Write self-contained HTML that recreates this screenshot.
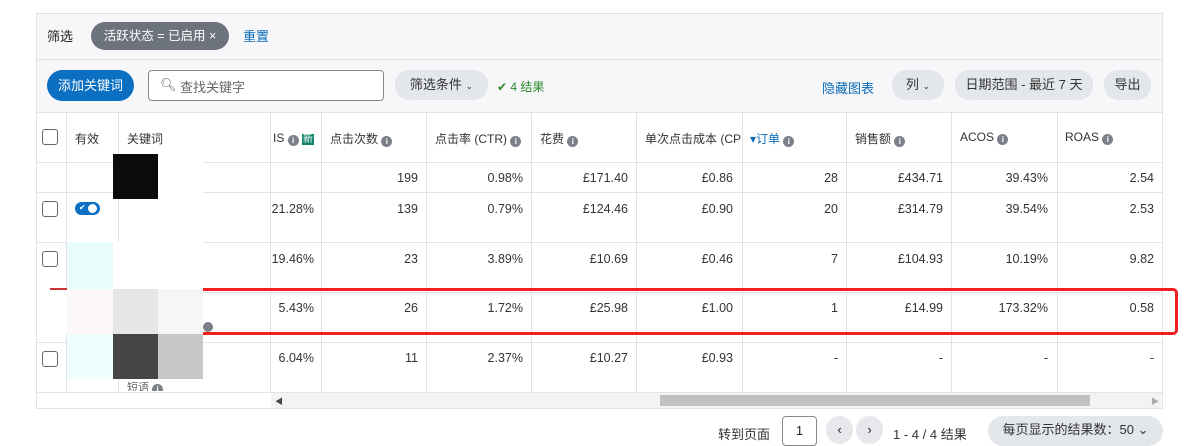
<!DOCTYPE html><html><head><meta charset="utf-8"><style>
body{margin:0;width:1185px;height:433px;overflow:hidden;background:#fff;font-family:"Liberation Sans","Noto Sans CJK SC",sans-serif;font-size:12.5px;color:#222;position:relative}
.a{position:absolute}
.hl{position:absolute;height:1px;background:#e3e3e6}
.vl{position:absolute;width:1px;background:#e3e3e6;top:112px;height:280px}
.pill{position:absolute;background:#e3e6ea;border-radius:14px;height:30px;line-height:30px;text-align:center;color:#333;font-size:13px}
.cb{position:absolute;width:14px;height:14px;border:1px solid #666;border-radius:3px;background:#fff}
.i{display:inline-block;width:11px;height:11px;border-radius:50%;background:#7b8088;color:#fff;font-size:8px;line-height:11px;text-align:center;vertical-align:-1px;font-weight:bold}
.r{position:absolute;text-align:right;color:#333}
.h{position:absolute;top:130px;color:#333;font-size:12px}
.blk{position:absolute}
</style></head><body>
<div class="a" style="left:36px;top:13px;width:1127px;height:396px;border:1px solid #e3e3e6;box-sizing:border-box;background:#fff"></div>
<div class="a" style="left:37px;top:14px;width:1125px;height:98px;background:#f7f7f9"></div>
<div class="hl" style="left:37px;top:59px;width:1125px"></div>
<div class="a" style="left:47px;top:26px;font-size:13px">筛选</div>
<div class="a" style="left:91px;top:22px;width:138px;height:28px;border-radius:14px;background:#6c737d;color:#fff;line-height:28px;text-align:center;font-size:12.5px">活跃状态 = 已启用 ×</div>
<div class="a" style="left:243px;top:26px;color:#0a6bb8;font-size:13px">重置</div>
<div class="a" style="left:47px;top:70px;width:87px;height:31px;border-radius:16px;background:#0b6fc2;color:#fff;line-height:31px;text-align:center;font-size:13px">添加关键词</div>
<div class="a" style="left:148px;top:70px;width:236px;height:31px;border:1px solid #888;border-radius:4px;box-sizing:border-box;background:#fff"></div>
<div class="a" style="left:160px;top:77px;color:#666;font-size:13px">🔍︎</div>
<div class="a" style="left:180px;top:77px;color:#666;font-size:13px">查找关键字</div>
<div class="pill" style="left:395px;top:70px;width:93px">筛选条件 <span style="font-size:9px">⌄</span></div>
<div class="a" style="left:497px;top:78px;color:#2a8a2a;font-size:12px">✔ 4 结果</div>
<div class="a" style="left:822px;top:78px;color:#0a6bb8;font-size:13px">隐藏图表</div>
<div class="pill" style="left:892px;top:70px;width:52px">列 <span style="font-size:9px">⌄</span></div>
<div class="pill" style="left:955px;top:70px;width:138px">日期范围 - 最近 7 天</div>
<div class="pill" style="left:1104px;top:70px;width:47px">导出</div>
<div class="hl" style="left:37px;top:112px;width:1125px"></div>
<div class="hl" style="left:37px;top:162px;width:1125px"></div>
<div class="hl" style="left:37px;top:192px;width:1125px"></div>
<div class="hl" style="left:37px;top:242px;width:1125px"></div>
<div class="hl" style="left:37px;top:292px;width:1125px"></div>
<div class="hl" style="left:37px;top:342px;width:1125px"></div>
<div class="hl" style="left:37px;top:392px;width:1125px"></div>
<div class="vl" style="left:66px"></div><div class="vl" style="left:118px"></div><div class="vl" style="left:270px"></div><div class="vl" style="left:321px"></div><div class="vl" style="left:426px"></div><div class="vl" style="left:531px"></div><div class="vl" style="left:636px"></div><div class="vl" style="left:742px"></div><div class="vl" style="left:846px"></div><div class="vl" style="left:951px"></div><div class="vl" style="left:1057px"></div>
<div class="cb" style="left:42px;top:129px"></div>
<div class="h" style="left:75px">有效</div><div class="h" style="left:127px">关键词</div>
<div class="h" style="left:273px">IS <span class="i">i</span> <span style="background:#14866d;color:#fff;font-size:10px;padding:0 1px">新</span></div>
<div class="h" style="left:330px">点击次数 <span class="i">i</span></div>
<div class="h" style="left:435px">点击率 (CTR) <span class="i">i</span></div>
<div class="h" style="left:540px">花费 <span class="i">i</span></div>
<div class="h" style="left:645px;width:96px;overflow:hidden;white-space:nowrap">单次点击成本 (CPC)</div>
<div class="h" style="left:750px;color:#0a6bb8">▾订单 <span class="i">i</span></div>
<div class="h" style="left:855px">销售额 <span class="i">i</span></div>
<div class="h" style="left:960px">ACOS <span class="i">i</span></div>
<div class="h" style="left:1065px">ROAS <span class="i">i</span></div>
<div class="r" style="left:321px;width:97px;top:171px">199</div><div class="r" style="left:426px;width:97px;top:171px">0.98%</div><div class="r" style="left:531px;width:97px;top:171px">£171.40</div><div class="r" style="left:636px;width:97px;top:171px">£0.86</div><div class="r" style="left:742px;width:96px;top:171px">28</div><div class="r" style="left:846px;width:97px;top:171px">£434.71</div><div class="r" style="left:951px;width:97px;top:171px">39.43%</div><div class="r" style="left:1057px;width:97px;top:171px">2.54</div>
<div class="r" style="left:270px;width:44px;top:202px">21.28%</div><div class="r" style="left:321px;width:97px;top:202px">139</div><div class="r" style="left:426px;width:97px;top:202px">0.79%</div><div class="r" style="left:531px;width:97px;top:202px">£124.46</div><div class="r" style="left:636px;width:97px;top:202px">£0.90</div><div class="r" style="left:742px;width:96px;top:202px">20</div><div class="r" style="left:846px;width:97px;top:202px">£314.79</div><div class="r" style="left:951px;width:97px;top:202px">39.54%</div><div class="r" style="left:1057px;width:97px;top:202px">2.53</div>
<div class="r" style="left:270px;width:44px;top:252px">19.46%</div><div class="r" style="left:321px;width:97px;top:252px">23</div><div class="r" style="left:426px;width:97px;top:252px">3.89%</div><div class="r" style="left:531px;width:97px;top:252px">£10.69</div><div class="r" style="left:636px;width:97px;top:252px">£0.46</div><div class="r" style="left:742px;width:96px;top:252px">7</div><div class="r" style="left:846px;width:97px;top:252px">£104.93</div><div class="r" style="left:951px;width:97px;top:252px">10.19%</div><div class="r" style="left:1057px;width:97px;top:252px">9.82</div>
<div class="r" style="left:270px;width:44px;top:301px">5.43%</div><div class="r" style="left:321px;width:97px;top:301px">26</div><div class="r" style="left:426px;width:97px;top:301px">1.72%</div><div class="r" style="left:531px;width:97px;top:301px">£25.98</div><div class="r" style="left:636px;width:97px;top:301px">£1.00</div><div class="r" style="left:742px;width:96px;top:301px">1</div><div class="r" style="left:846px;width:97px;top:301px">£14.99</div><div class="r" style="left:951px;width:97px;top:301px">173.32%</div><div class="r" style="left:1057px;width:97px;top:301px">0.58</div>
<div class="r" style="left:270px;width:44px;top:351px">6.04%</div><div class="r" style="left:321px;width:97px;top:351px">11</div><div class="r" style="left:426px;width:97px;top:351px">2.37%</div><div class="r" style="left:531px;width:97px;top:351px">£10.27</div><div class="r" style="left:636px;width:97px;top:351px">£0.93</div><div class="r" style="left:742px;width:96px;top:351px">-</div><div class="r" style="left:846px;width:97px;top:351px">-</div><div class="r" style="left:951px;width:97px;top:351px">-</div><div class="r" style="left:1057px;width:97px;top:351px">-</div>
<div class="cb" style="left:42px;top:201px"></div><div class="cb" style="left:42px;top:251px"></div><div class="cb" style="left:42px;top:351px"></div>
<div class="a" style="left:75px;top:202px;width:25px;height:13px;border-radius:7px;background:#0b6fc2"><div class="a" style="left:13px;top:2px;width:9px;height:9px;border-radius:50%;background:#fff"></div><div class="a" style="left:4px;top:1px;color:#fff;font-size:8px;line-height:10px">✔</div></div>
<div class="blk" style="left:113px;top:154px;width:45px;height:45px;background:#0c0a0c"></div>
<div class="blk" style="left:158px;top:154px;width:45px;height:45px;background:#fff"></div>
<div class="blk" style="left:67px;top:242px;width:46px;height:47px;background:#e9fcfc"></div>
<div class="blk" style="left:113px;top:242px;width:90px;height:47px;background:#fff"></div>
<div class="blk" style="left:37px;top:289px;width:30px;height:45px;background:#fff"></div>
<div class="blk" style="left:67px;top:289px;width:46px;height:45px;background:#fdf8f8"></div>
<div class="blk" style="left:113px;top:289px;width:45px;height:45px;background:#e6e5e8"></div>
<div class="blk" style="left:158px;top:289px;width:45px;height:45px;background:#f6f6f6"></div>
<div class="blk" style="left:67px;top:334px;width:46px;height:45px;background:#eefdfd"></div>
<div class="blk" style="left:113px;top:334px;width:45px;height:45px;background:#454547"></div>
<div class="blk" style="left:158px;top:334px;width:45px;height:45px;background:#c7c6c8"></div>
<div class="a" style="left:127px;top:379px;color:#666;font-size:11px;height:12px;overflow:hidden">短语 <span class="i">i</span></div>
<div class="a" style="left:203px;top:322px;width:10px;height:10px;border-radius:50%;background:#7b8088"></div>
<div class="a" style="left:203px;top:288px;width:972px;height:41px;border:3px solid #ee2020;border-left:none;border-radius:0 5px 5px 0"></div>
<div class="a" style="left:50px;top:288px;width:17px;height:2px;background:#c33"></div>
<div class="a" style="left:271px;top:393px;width:890px;height:15px;background:#f3f3f5"></div>
<div class="a" style="left:275px;top:396px;font-size:8px;color:#444">◀</div>
<div class="a" style="left:660px;top:395px;width:430px;height:11px;background:#c1c1c1"></div>
<div class="a" style="left:1151px;top:396px;font-size:8px;color:#aaa">▶</div>
<div class="a" style="left:718px;top:424px;font-size:13px;color:#333">转到页面</div>
<div class="a" style="left:782px;top:416px;width:35px;height:30px;border:1px solid #888;border-radius:4px;box-sizing:border-box;text-align:center;line-height:28px;font-size:13px">1</div>
<div class="a" style="left:826px;top:416px;width:27px;height:28px;border-radius:14px;background:#e6e8ec;text-align:center;line-height:28px;font-size:13px">‹</div>
<div class="a" style="left:856px;top:416px;width:27px;height:28px;border-radius:14px;background:#e6e8ec;text-align:center;line-height:28px;font-size:13px">›</div>
<div class="a" style="left:893px;top:424px;font-size:13px;color:#333">1 - 4 / 4 结果</div>
<div class="a" style="left:988px;top:416px;width:175px;height:30px;border-radius:15px;background:#e3e6ea;text-align:center;line-height:28px;font-size:13px;color:#333">每页显示的结果数：50 ⌄</div>
</body></html>
